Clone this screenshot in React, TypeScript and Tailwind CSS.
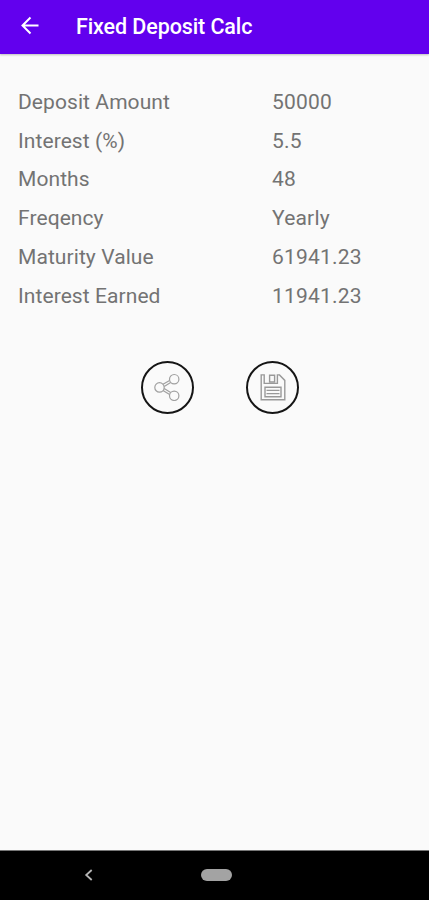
const rows = [
    { label: "Deposit Amount", value: "50000" },
    { label: "Interest (%)", value: "5.5" },
    { label: "Months", value: "48" },
    { label: "Freqency", value: "Yearly" },
    { label: "Maturity Value", value: "61941.23" },
    { label: "Interest Earned", value: "11941.23" },
]

function BackIcon() {
    return (
        <svg width="20" height="20" viewBox="0 0 20 20" fill="none" stroke="#fff" strokeWidth="2">
            <path d="M18.5 9.5H3M10.5 1.5L2.5 9.5l8 8" />
        </svg>
    )
}

function ShareIcon() {
    return (
        <svg width="28" height="28" viewBox="0 0 28 28" fill="none" stroke="#a0a0a0" strokeWidth="1.2">
            <path d="M9 11.2L15.6 7.4M10.2 13.4L16.6 9.6M10.2 15.4L16.6 19.4M9 17.6L15.6 21.6" />
            <circle cx="5.5" cy="14.4" r="4.7" />
            <circle cx="20.2" cy="6.2" r="4.7" />
            <circle cx="20.2" cy="22.8" r="4.7" />
        </svg>
    )
}

function SaveIcon() {
    return (
        <svg width="28" height="28" viewBox="0 0 28 28" fill="none" stroke="#999" strokeWidth="1.4">
            <path d="M2.2 1.9H5.2V10.4H18.4V1.9H20.5L25.8 7.4V26.7H2.2Z" />
            <path d="M10.6 2.2H15.6V9H10.6Z" />
            <path d="M6 14.2H22V23.7H6Z" />
            <path d="M7.5 17.4H20.5M7.5 20.6H20.5" />
        </svg>
    )
}

export default function App() {
    return (
        <div className="flex h-[900px] w-[429px] flex-col overflow-hidden bg-[#fafafa] font-['Roboto',sans-serif]">
            <header className="flex h-[54px] shrink-0 items-center bg-[#6200ee] pb-[3px] pl-5 shadow-[0_1px_2px_rgba(0,0,0,0.25)]">
                <BackIcon />
                <h1 className="ml-9 whitespace-nowrap pt-[3px] text-[21.5px] font-medium tracking-[-0.1px] text-white">Fixed Deposit Calc</h1>
            </header>
            <main className="flex flex-1 flex-col pt-[29px]">
                <dl className="pl-[18px]">
                    {rows.map(row => (
                        <div key={row.label} className="flex h-[38.9px] items-center whitespace-nowrap text-[21px] text-[#737373]">
                            <dt className="w-[254px] tracking-[0.08px]">{row.label}</dt>
                            <dd className="tracking-[0.2px]">{row.value}</dd>
                        </div>
                    ))}
                </dl>
                <div className="mt-[44.6px] flex gap-[52px] pl-[141px]">
                    <button aria-label="Share" className="flex size-[53px] items-center justify-center rounded-full border-2 border-[#151515]">
                        <ShareIcon />
                    </button>
                    <button aria-label="Save" className="flex size-[53px] items-center justify-center rounded-full border-2 border-[#151515]">
                        <SaveIcon />
                    </button>
                </div>
            </main>
            <nav className="flex h-[50px] shrink-0 items-center border-t border-[#777] bg-black pb-px pl-[84px]">
                <svg width="9" height="12" viewBox="0 0 9 12" fill="none" stroke="#b5b5b5" strokeWidth="1.8">
                    <path d="M7.7 1L2.2 6l5.5 5" />
                </svg>
                <div className="ml-[108px] h-3 w-[31px] rounded-full bg-[#a3a3a3]" />
            </nav>
        </div>
    )
}
